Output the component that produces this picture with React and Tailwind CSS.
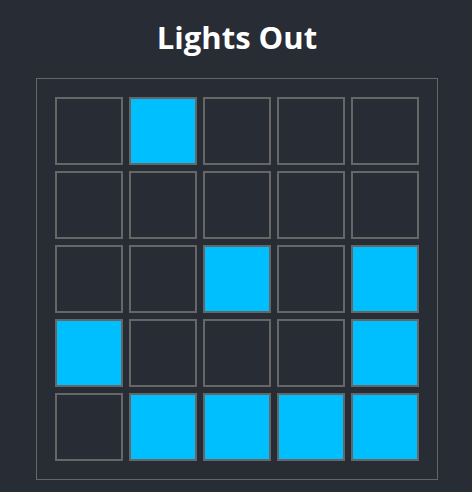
const board = [
  [0, 1, 0, 0, 0],
  [0, 0, 0, 0, 0],
  [0, 0, 1, 0, 1],
  [1, 0, 0, 0, 1],
  [0, 1, 1, 1, 1],
];

export default function App() {
  return (
    <div className="min-h-screen bg-[#282c34] pt-[17px] font-['Open_Sans',sans-serif]">
      <h1 className="pl-[2px] text-center text-[31px] leading-[40px] font-bold text-white">
        Lights Out
      </h1>

      <div className="ml-[36px] mt-[21px] w-[402px] border border-[#666] p-[18px]">
        <div className="grid grid-cols-5 gap-[6px]">
          {board.flat().map((on, i) => (
            <div
              key={i}
              className={
                on
                  ? "h-[68px] w-[68px] border-2 border-[#666] bg-[#00bfff]"
                  : "h-[68px] w-[68px] border-2 border-[#666]"
              }
            />
          ))}
        </div>
      </div>
    </div>
  );
}
